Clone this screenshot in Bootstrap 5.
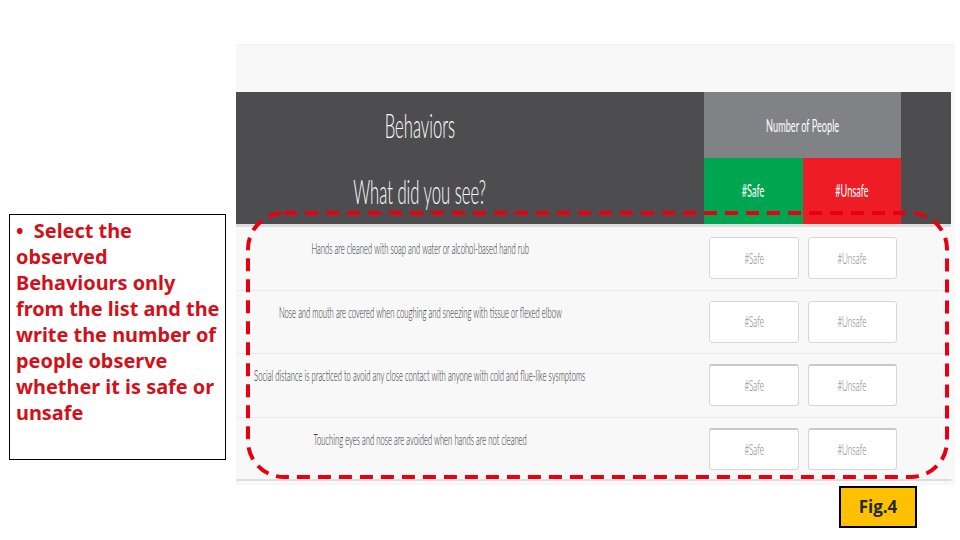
<!DOCTYPE html>
<html lang="en">
<head>
<meta charset="utf-8">
<title>Fig.4</title>
<link href="https://cdn.jsdelivr.net/npm/bootstrap@5.3.0/dist/css/bootstrap.min.css" rel="stylesheet">
<style>
html,body{margin:0;background:#fff;overflow:hidden}
.stage{width:960px;height:540px;font-family:"Lato","Liberation Sans",sans-serif}
.note-col{width:236px;padding:214px 0 0 9px;flex:none}
.note-box{width:217px;height:246px;border:1px solid #000;padding:3px 0 0 6px;font-family:"Noto Sans","Open Sans",sans-serif;font-weight:700;font-size:19.9px;line-height:26px;color:#d2101a;white-space:nowrap}
.main-col{width:719px;padding-top:44px;flex:none}
.panel{background:#f8f8f8;border-top:1px solid #f1f1f1;height:441px}
.top-gap{height:47px}
.head-area{width:715px;height:132px;background:#4d4d4f}
.title-col{width:368px;margin-right:100px}
.title-line{height:66px}
.squish{display:inline-block;white-space:nowrap;transform:scaleX(.54)}
.title-text{font-size:34px;color:#fff;line-height:1;font-weight:300;transform:scaleX(.49)}
.people-col{width:197px}
.people-cell{height:66px;background:#808285;color:#fff;font-size:17px;padding-top:2px}
.safe-cell,.unsafe-cell{height:66px;width:50%;color:#fff;font-size:17px}
.safe-cell{background:#00a551}
.unsafe-cell{background:#ee1c25}
.head-rule{width:715px;height:3px;background:#dcdcdc}
.beh-row{width:715px;height:63.5px;border-bottom:1px solid #ebebeb}
.beh-row:last-child{border-bottom:2px solid #dedede}
.beh-text{width:368px;flex:none;height:100%;padding-top:12px}
.beh-text .squish{font-size:15px;font-weight:300;color:#26262c;transform:scaleX(.51);line-height:18px}
.beh-cells{margin-left:105px;gap:9px;padding-top:10px}
.count-box.form-control{width:89.5px;height:42px;border-radius:3px;border:1px solid #d6d6d6;background:#fff;padding:0;font-size:15px;font-weight:300}
.count-box{display:flex;align-items:center;justify-content:center;color:#7c7c7c}
.beh-row:nth-child(n+6) .count-box.form-control{border-top:2px solid #c9c9c9}
.fig-row{padding-right:38px;padding-top:1px}
.fig-tag{width:78px;height:42px;background:#ffc000;border:2px solid #000;font-family:"Open Sans",sans-serif;font-weight:700;font-size:17px;color:#1f2a36}
.dash-overlay{left:0;top:0;pointer-events:none}
</style>
</head>
<body>
<div class="stage position-relative d-flex align-items-start">
  <div class="note-col">
    <div class="note-box">•&nbsp; Select the<br>observed<br>Behaviours only<br>from the list and the<br>write the number of<br>people observe<br>whether it is safe or<br>unsafe</div>
  </div>
  <div class="main-col">
    <div class="panel">
      <div class="top-gap"></div>
      <div class="head-area d-flex">
        <div class="title-col">
          <div class="title-line d-flex align-items-center justify-content-center"><span class="squish title-text">Behaviors</span></div>
          <div class="title-line d-flex align-items-center justify-content-center"><span class="squish title-text">What did you see?</span></div>
        </div>
        <div class="people-col">
          <div class="people-cell d-flex align-items-center justify-content-center"><span class="squish">Number of People</span></div>
          <div class="d-flex">
            <div class="safe-cell d-flex align-items-center justify-content-center"><span class="squish">#Safe</span></div>
            <div class="unsafe-cell d-flex align-items-center justify-content-center"><span class="squish">#Unsafe</span></div>
          </div>
        </div>
      </div>
      <div class="head-rule"></div>
      <div class="beh-row d-flex">
        <div class="beh-text d-flex justify-content-center align-items-start"><span class="squish">Hands are cleaned with soap and water or alcohol-based hand rub</span></div>
        <div class="beh-cells d-flex"><div class="form-control count-box"><span class="squish">#Safe</span></div><div class="form-control count-box"><span class="squish">#Unsafe</span></div></div>
      </div>
      <div class="beh-row d-flex">
        <div class="beh-text d-flex justify-content-center align-items-start"><span class="squish">Nose and mouth are covered when coughing and sneezing with tissue or flexed elbow</span></div>
        <div class="beh-cells d-flex"><div class="form-control count-box"><span class="squish">#Safe</span></div><div class="form-control count-box"><span class="squish">#Unsafe</span></div></div>
      </div>
      <div class="beh-row d-flex">
        <div class="beh-text d-flex justify-content-center align-items-start"><span class="squish">Social distance is practiced to avoid any close contact with anyone with cold and flue-like sysmptoms</span></div>
        <div class="beh-cells d-flex"><div class="form-control count-box"><span class="squish">#Safe</span></div><div class="form-control count-box"><span class="squish">#Unsafe</span></div></div>
      </div>
      <div class="beh-row d-flex">
        <div class="beh-text d-flex justify-content-center align-items-start"><span class="squish">Touching eyes and nose are avoided when hands are not cleaned</span></div>
        <div class="beh-cells d-flex"><div class="form-control count-box"><span class="squish">#Safe</span></div><div class="form-control count-box"><span class="squish">#Unsafe</span></div></div>
      </div>
    </div>
    <div class="fig-row d-flex justify-content-end">
      <div class="fig-tag d-flex align-items-center justify-content-center">Fig.4</div>
    </div>
  </div>
  <svg class="dash-overlay position-absolute" width="960" height="540" viewBox="0 0 960 540" aria-hidden="true">
    <rect x="248" y="213" width="699" height="264" rx="36" ry="36" fill="none" stroke="#e60012" stroke-width="4" stroke-dasharray="13 8"/>
  </svg>
</div>
<script src="https://cdn.jsdelivr.net/npm/bootstrap@5.3.0/dist/js/bootstrap.bundle.min.js"></script>
</body>
</html>
